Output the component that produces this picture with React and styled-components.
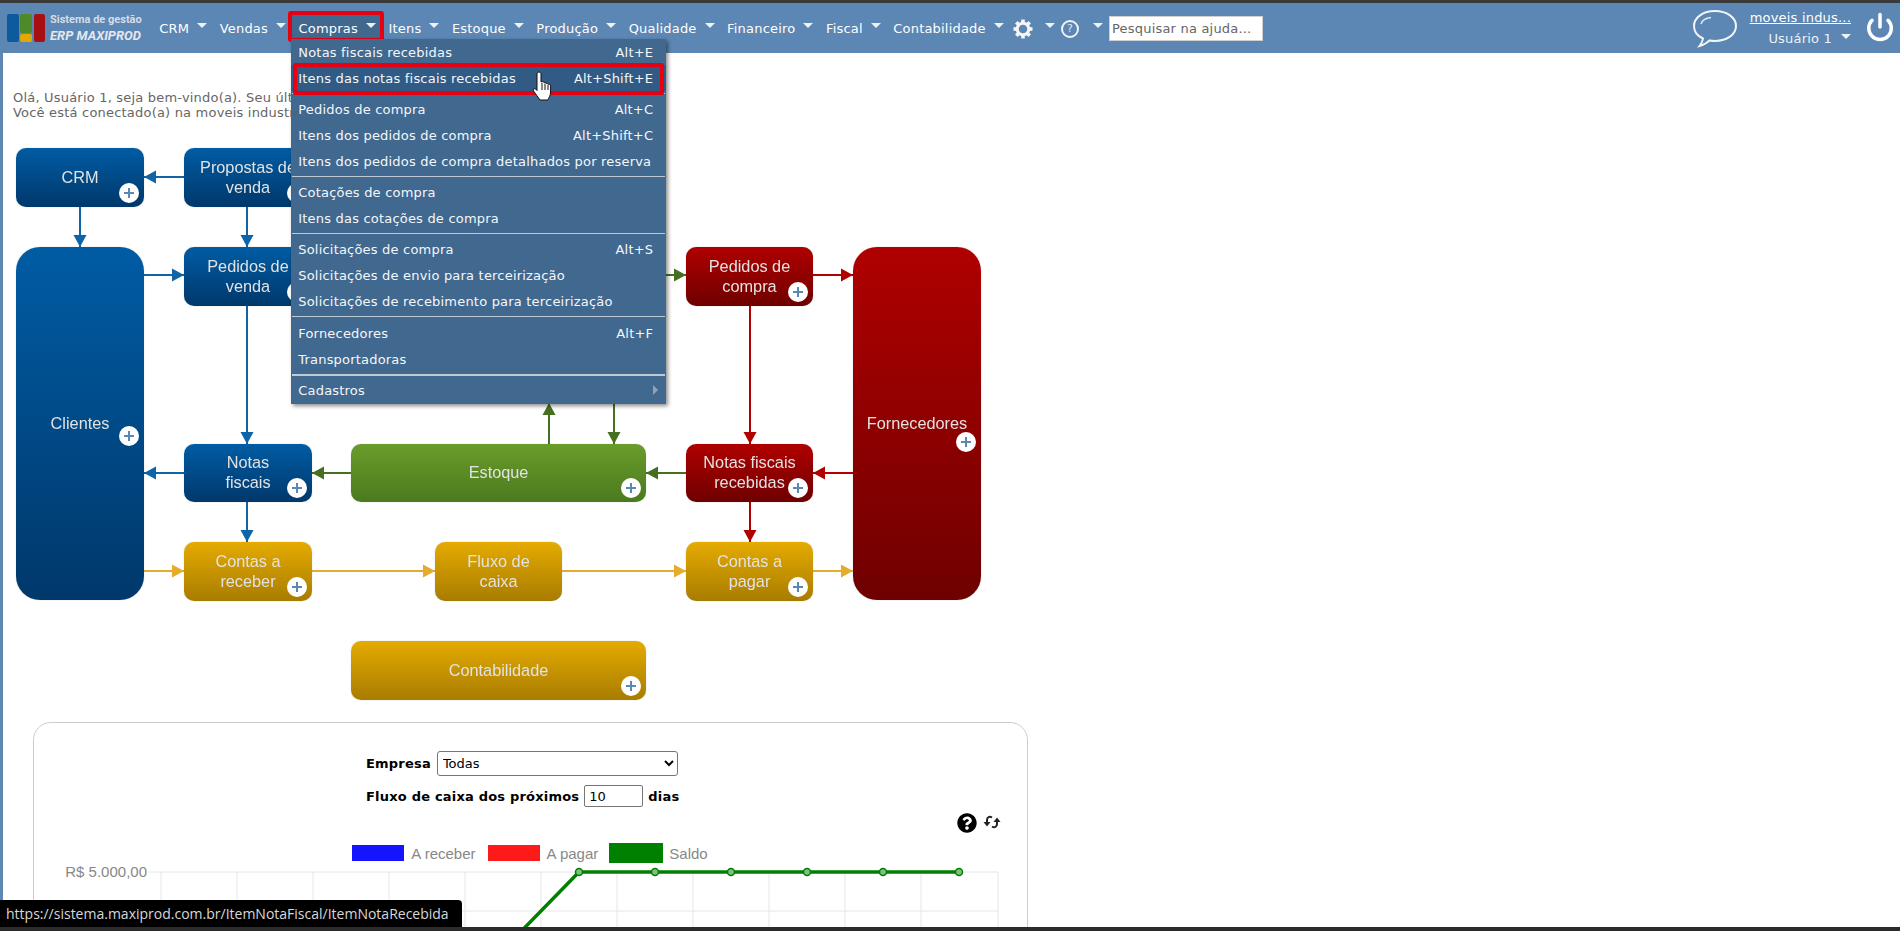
import styled, { createGlobalStyle } from "styled-components";
import { FaQuestionCircle } from "react-icons/fa";
import { Power } from "lucide-react";

const GlobalStyle = createGlobalStyle`
  html, body {
    margin: 0;
    padding: 0;
    height: 931px;
    overflow: hidden;
    background: #fff;
    font-family: "DejaVu Sans", Verdana, sans-serif;
    font-size: 13px;
    letter-spacing: 0.2px;
  }
`;

const Frame = styled.div`
  position: relative;
  display: flex;
  flex-direction: column;
  height: 931px;
  overflow: hidden;
`;

const TopEdge = styled.div`
  height: 3px;
  background: #3a3a3a;
`;

const BottomEdge = styled.div`
  height: 4px;
  background: #2b2b2b;
  position: relative;
  z-index: 6;
`;

const Nav = styled.nav`
  display: flex;
  align-items: center;
  height: 50px;
  background: #5c86b3;
  color: #fff;
  padding: 0 5px 0 7px;
  position: relative;
  z-index: 5;
`;

const Logo = styled.div`
  display: flex;
  gap: 5px;
  width: 137px;
  margin-right: 9px;
  align-items: center;
  letter-spacing: 0;
`;

const LogoMark = styled.svg`
  width: 38px;
  height: 28px;
  flex: none;
`;

const LogoText = styled.div`
  font-family: Roboto, sans-serif;
  display: flex;
  flex-direction: column;
  gap: 1px;
  white-space: nowrap;
`;

const LogoTop = styled.span`
  font-size: 11px;
  font-weight: 700;
  line-height: 14px;
  color: #d5dce5;
`;

const LogoBottom = styled.span`
  font-size: 13px;
  font-weight: 700;
  font-style: italic;
  line-height: 15px;
  color: #e4e8ee;
`;

const NavItem = styled.div`
  position: relative;
  display: flex;
  align-items: center;
  gap: ${(p) => (p.$icon ? "12px" : "8px")};
  padding: 0 ${(p) => (p.$icon ? "3px" : "6.25px")};
  height: 28px;
  white-space: nowrap;

  ${(p) =>
    p.$active &&
    `
    &::after {
      content: "";
      position: absolute;
      top: -3px;
      bottom: 0;
      left: -4px;
      right: -2px;
      background: #41688f;
      border: 4px solid #e60012;
      border-radius: 3px;
    }
    & > * {
      position: relative;
      z-index: 1;
    }
  `}
`;

const Caret = styled.i`
  display: block;
  width: 0;
  height: 0;
  border-left: 5px solid transparent;
  border-right: 5px solid transparent;
  border-top: 5px solid #eef2f6;
  margin-bottom: 5px;
`;

const Gear = styled.svg`
  display: block;
  width: 20px;
  height: 20px;
  margin-top: 2px;
`;

const HelpRing = styled.span`
  display: flex;
  align-items: center;
  justify-content: center;
  box-sizing: border-box;
  width: 18px;
  height: 18px;
  margin-top: 1px;
  margin-right: 2px;
  border: 2px solid #f2f2f2;
  border-radius: 50%;
  font-size: 11px;
  color: #dfe6ee;
`;

const Search = styled.input`
  box-sizing: border-box;
  width: 154px;
  height: 25px;
  margin-left: 3px;
  padding: 0 2px;
  border: 1px solid #d0d0d0;
  background: #fff;
  font: 13px "DejaVu Sans", sans-serif;
  letter-spacing: 0.2px;

  &::placeholder {
    color: #666;
    opacity: 1;
  }
`;

const RightBox = styled.div`
  margin-left: auto;
  display: flex;
  align-items: center;
`;

const Bubble = styled.svg`
  width: 46px;
  height: 40px;
  margin-right: 12px;
  margin-top: 2px;
`;

const UserBox = styled.div`
  display: flex;
  flex-direction: column;
  align-items: flex-end;
  gap: 5px;
  margin-right: 14px;
  line-height: 16px;
`;

const OrgLink = styled.a`
  color: #fff;
  text-decoration: underline;
`;

const UserName = styled.div`
  display: flex;
  align-items: center;
  gap: 9px;
  color: #eef2f6;
`;

const PowerIcon = styled(Power)`
  display: block;
  margin-top: -2px;
`;

const Main = styled.main`
  flex: 1;
  min-height: 0;
  overflow: hidden;
  border-left: 3px solid #5f87b3;
  background: #fff;
`;

const Welcome = styled.div`
  padding: 37px 0 0 10px;
  height: 30px;
  line-height: 15px;
  color: #666;
  white-space: nowrap;
`;

const Canvas = styled.div`
  position: relative;
  width: 1000px;
  height: 590px;
  margin-top: 10px;
`;

const Wires = styled.svg`
  position: absolute;
  inset: 0;
`;

const gradients = {
  blue: "linear-gradient(#005ca4, #00386b)",
  red: "linear-gradient(#b00000, #6f0000)",
  green: "linear-gradient(#699c2a, #4b7a1f)",
  yellow: "linear-gradient(#e5ab00, #a87c00)",
};

const Node = styled.div`
  position: absolute;
  left: ${(p) => p.$x - 3}px;
  top: ${(p) => p.$y - 130}px;
  width: ${(p) => p.$w}px;
  height: ${(p) => p.$h}px;
  display: flex;
  align-items: center;
  justify-content: center;
  text-align: center;
  box-sizing: border-box;
  border-radius: ${(p) => (p.$h > 100 ? "24px" : "10px")};
  background: ${(p) => gradients[p.$color]};
  box-shadow: 0 0 1px rgba(0, 0, 0, 0.35);
  font: 16.3px/20px "Liberation Sans", Arial, sans-serif;
  letter-spacing: 0;
  color: #e2e2e2;
`;

const NodeLabel = styled.div`
  margin-top: -2px;
  filter: blur(0.35px);
`;

const Plus = styled.span`
  position: absolute;
  right: 5px;
  ${(p) => (p.$top ? `top: ${p.$top}px;` : "bottom: 4px;")}
  width: 20px;
  height: 20px;
  border-radius: 50%;
  background: #fff;

  &::before,
  &::after {
    content: "";
    position: absolute;
    background: #5a88b5;
  }
  &::before {
    left: 5px;
    right: 5px;
    top: 9px;
    height: 2px;
  }
  &::after {
    top: 5px;
    bottom: 5px;
    left: 9px;
    width: 2px;
  }
`;

const Menu = styled.div`
  position: absolute;
  left: -1px;
  top: 25px;
  z-index: 2;
  width: 375px;
  padding-bottom: 1px;
  background: #41688f;
  box-shadow: 2px 2px 4px rgba(0, 0, 0, 0.45);
`;

const MenuRow = styled.div`
  position: relative;
  display: flex;
  justify-content: space-between;
  align-items: center;
  height: 26px;
  padding: 0 13px 0 7px;
  color: #f4f7fa;

  ${(p) =>
    p.$active &&
    `
    background: #315b84;
    &::after {
      content: "";
      position: absolute;
      left: 2px;
      right: 2px;
      top: -2px;
      bottom: -4px;
      border: 4px solid #e60012;
      border-radius: 2px;
    }
  `}
`;

const MenuLine = styled.div`
  height: ${(p) => (p.$thick ? "2px" : "1px")};
  margin: 2px 1px ${(p) => (p.$thick ? "1px" : p.$extra ? "3px" : "2px")};
  background: #bfc9d4;
`;

const SubArrow = styled.i`
  width: 0;
  height: 0;
  border-top: 5px solid transparent;
  border-bottom: 5px solid transparent;
  border-left: 5px solid #93a3b4;
  margin-right: -5px;
`;

const Cursor = styled.svg`
  position: absolute;
  left: 241px;
  top: 32px;
  z-index: 3;
  width: 22px;
  height: 30px;
`;

const Panel = styled.section`
  box-sizing: border-box;
  width: 995px;
  height: 300px;
  margin: 2px 0 0 30px;
  border: 1px solid #ccc;
  border-radius: 18px;
  padding-top: 28px;
`;

const FormRow = styled.div`
  display: flex;
  align-items: center;
  gap: ${(p) => p.$gap}px;
  margin: ${(p) => p.$top}px 0 0 332px;
  height: ${(p) => p.$h}px;
  color: #000;
  font-weight: 700;
`;

const Select = styled.select`
  box-sizing: border-box;
  width: 241px;
  height: 25px;
  padding-left: 1px;
  background: #fff;
  border: 1px solid #767676;
  border-radius: 3px;
  font: 13px "DejaVu Sans", sans-serif;
`;

const NumberInput = styled.input`
  box-sizing: border-box;
  width: 59px;
  height: 22px;
  padding: 0 4px;
  border: 1px solid #767676;
  border-radius: 2px;
  font: 13px "DejaVu Sans", sans-serif;
`;

const Tools = styled.div`
  display: flex;
  justify-content: flex-end;
  align-items: center;
  gap: 6px;
  height: 20px;
  margin-top: 6px;
  padding-right: 26px;
  color: #000;
`;

const RefreshIcon = styled.svg`
  display: block;
  width: 18px;
  height: 14px;
  margin-top: -2px;
`;

const Legend = styled.div`
  display: flex;
  justify-content: center;
  align-items: center;
  height: 20px;
  margin: 10px 1px 0 0;
  font: 15px "Liberation Sans", Arial, sans-serif;
  letter-spacing: 0;
  color: #888;
`;

const LegendItem = styled.div`
  display: flex;
  align-items: center;
  gap: 7px;
  margin-right: 12px;
  &:last-child {
    margin: 0 0 0 -1px;
    gap: 6px;
  }
`;

const Swatch = styled.span`
  display: block;
  width: ${(p) => p.$w}px;
  height: ${(p) => p.$h}px;
  background: ${(p) => p.$color};
`;

const Chart = styled.svg`
  display: block;
  width: 993px;
  height: 120px;
  margin-top: 1px;
`;

const StatusTip = styled.div`
  position: absolute;
  left: 0;
  bottom: 4px;
  z-index: 4;
  height: 27px;
  width: 462px;
  box-sizing: border-box;
  padding-left: 6px;
  display: flex;
  align-items: center;
  background: #000;
  border-top-right-radius: 4px;
  color: #d8d8d8;
  font: 14px "Open Sans", sans-serif;
  letter-spacing: 0;
  white-space: nowrap;
`;

const navLabels = [
  "CRM",
  "Vendas",
  "Compras",
  "Itens",
  "Estoque",
  "Produção",
  "Qualidade",
  "Financeiro",
  "Fiscal",
  "Contabilidade",
];

const menuGroups = [
  [
    ["Notas fiscais recebidas", "Alt+E"],
    ["Itens das notas fiscais recebidas", "Alt+Shift+E", true],
  ],
  [
    ["Pedidos de compra", "Alt+C"],
    ["Itens dos pedidos de compra", "Alt+Shift+C"],
    ["Itens dos pedidos de compra detalhados por reserva"],
  ],
  [["Cotações de compra"], ["Itens das cotações de compra"]],
  [
    ["Solicitações de compra", "Alt+S"],
    ["Solicitações de envio para terceirização"],
    ["Solicitações de recebimento para terceirização"],
  ],
  [["Fornecedores", "Alt+F"], ["Transportadoras"]],
];

const nodes = [
  { label: ["CRM"], x: 16, y: 148, w: 128, h: 59, color: "blue" },
  { label: ["Propostas de", "venda"], x: 184, y: 148, w: 128, h: 59, color: "blue" },
  { label: ["Clientes"], x: 16, y: 247, w: 128, h: 353, color: "blue", plusTop: 179 },
  { label: ["Pedidos de", "venda"], x: 184, y: 247, w: 128, h: 59, color: "blue" },
  { label: ["Notas", "fiscais"], x: 184, y: 444, w: 128, h: 58, color: "blue" },
  { label: ["Estoque"], x: 351, y: 444, w: 295, h: 58, color: "green" },
  { label: ["Contas a", "receber"], x: 184, y: 542, w: 128, h: 59, color: "yellow" },
  { label: ["Fluxo de", "caixa"], x: 435, y: 542, w: 127, h: 59, color: "yellow", noPlus: true },
  { label: ["Contabilidade"], x: 351, y: 641, w: 295, h: 59, color: "yellow" },
  { label: ["Pedidos de", "compra"], x: 686, y: 247, w: 127, h: 59, color: "red" },
  { label: ["Notas fiscais", "recebidas"], x: 686, y: 444, w: 127, h: 58, color: "red" },
  { label: ["Contas a", "pagar"], x: 686, y: 542, w: 127, h: 59, color: "yellow" },
  { label: ["Fornecedores"], x: 853, y: 247, w: 128, h: 353, color: "red", plusTop: 185 },
];

const BLUE = "#0f64a8";
const GREEN = "#45701f";
const RED = "#b00000";
const YELLOW = "#e5ab2b";

const arrows = [
  [184, 177, 144, 177, BLUE],
  [80, 207, 80, 247, BLUE],
  [247, 207, 247, 247, BLUE],
  [144, 275, 184, 275, BLUE],
  [247, 306, 247, 444, BLUE],
  [184, 473, 144, 473, BLUE],
  [247, 502, 247, 542, BLUE],
  [351, 473, 312, 473, GREEN],
  [686, 473, 646, 473, GREEN],
  [549, 444, 549, 403, GREEN],
  [614, 403, 614, 444, GREEN],
  [660, 275, 686, 275, GREEN],
  [144, 571, 184, 571, YELLOW],
  [312, 571, 435, 571, YELLOW],
  [562, 571, 686, 571, YELLOW],
  [813, 571, 853, 571, YELLOW],
  [813, 275, 853, 275, RED],
  [750, 306, 750, 444, RED],
  [853, 473, 813, 473, RED],
  [750, 502, 750, 542, RED],
];

function arrowHead(x1, y1, x2, y2) {
  const dx = Math.sign(x2 - x1);
  const dy = Math.sign(y2 - y1);
  const bx = x2 - dx * 12;
  const by = y2 - dy * 12;
  return `${x2},${y2} ${bx + dy * 6.5},${by + dx * 6.5} ${bx - dy * 6.5},${by - dx * 6.5}`;
}

const gridX = [160, 236, 312, 388, 464, 540, 616, 692, 768, 844, 920, 997];
const gridY = [873, 912, 952];
const dots = [578, 654, 730, 806, 882, 958];
const gearTeeth = [0, 45, 90, 135, 180, 225, 270, 315];

const App = () => {
  return (
    <Frame>
      <GlobalStyle />
      <TopEdge />
      <Nav>
        <Logo>
          <LogoMark viewBox="0 0 38 28">
            <rect x="0" y="0" width="12" height="28" rx="2" fill="#0d5a9e" />
            <rect x="13" y="0" width="12" height="19" rx="2" fill="#4f8a2a" />
            <rect x="13" y="20" width="12" height="8" rx="2" fill="#e0a800" />
            <rect x="27" y="0" width="11" height="28" rx="2" fill="#a80f12" />
          </LogoMark>
          <LogoText>
            <LogoTop>Sistema de gestão</LogoTop>
            <LogoBottom>ERP MAXIPROD</LogoBottom>
          </LogoText>
        </Logo>

        {navLabels.map((label) => (
          <NavItem key={label} $active={label === "Compras"}>
            <span>{label}</span>
            <Caret />
            {label === "Compras" && (
              <Menu>
                <Cursor viewBox="0 0 22 30">
                  <path
                    d="M7 1c1.2 0 2 1 2 2v8l1-.3c1-.2 1.8.2 2 .9.9-.4 1.9-.1 2.2.8 1-.4 2-.1 2.4.9.8-.3 2 .2 2 1.5V21c0 3-1.5 6-3 8H8C6.5 27 3.5 22.5 1.5 20c-1-1.5.5-3 2-2L5 19.5V3c0-1 1-2 2-2Z"
                    fill="#fff"
                    stroke="#111"
                    strokeWidth="1"
                  />
                  <path d="M10 12v7M13 12.500v6.500M16 13.500v5.500" stroke="#111" strokeWidth="1" />
                </Cursor>
                {menuGroups.map((group, i) => (
                  <div key={i}>
                    {group.map(([text, shortcut, active]) => (
                      <MenuRow key={text} $active={active}>
                        <span>{text}</span>
                        {shortcut && <span>{shortcut}</span>}
                      </MenuRow>
                    ))}
                    <MenuLine $thick={i === menuGroups.length - 1} $extra={i === 3} />
                  </div>
                ))}
                <MenuRow>
                  <span>Cadastros</span>
                  <SubArrow />
                </MenuRow>
              </Menu>
            )}
          </NavItem>
        ))}

        <NavItem $icon>
          <Gear viewBox="0 0 20 20">
            <circle cx="10" cy="10" r="5.800" fill="none" stroke="#f6f6f6" strokeWidth="3" />
            {gearTeeth.map((angle) => (
              <rect
                key={angle}
                x="8.200"
                y="0.500"
                width="3.600"
                height="4"
                fill="#f6f6f6"
                transform={`rotate(${angle} 10 10)`}
              />
            ))}
          </Gear>
          <Caret />
        </NavItem>
        <NavItem $icon>
          <HelpRing>?</HelpRing>
          <Caret />
        </NavItem>
        <Search placeholder="Pesquisar na ajuda..." />

        <RightBox>
          <Bubble viewBox="0 0 46 40">
            <path
              d="M23 2C11 2 2 8.500 2 17c0 5.500 3.500 10 9 12.500-.3 2.500-1.500 5-3.500 7.500 4-1 7.500-3 10-5.600 1.800.3 3.600.5 5.500.5 12 0 21-6.500 21-14.900S35 2 23 2Z"
              fill="none"
              stroke="#f2f5f8"
              strokeWidth="2"
            />
            <path d="M9 15c1-3.500 5-6 10-6.500" fill="none" stroke="#dfe7ef" strokeWidth="1.500" />
          </Bubble>
          <UserBox>
            <OrgLink>moveis indus...</OrgLink>
            <UserName>
              <span>Usuário 1</span>
              <Caret />
            </UserName>
          </UserBox>
          <PowerIcon size={30} color="#fff" strokeWidth={2.8} />
        </RightBox>
      </Nav>

      <Main>
        <Welcome>
          Olá, Usuário 1, seja bem-vindo(a). Seu último acesso
          <br />
          Você está conectado(a) na moveis industriais
        </Welcome>

        <Canvas>
          <Wires width="1000" height="590" viewBox="3 130 1000 590">
            {arrows.map(([x1, y1, x2, y2, color], i) => (
              <g key={i}>
                <line x1={x1} y1={y1} x2={x2} y2={y2} stroke={color} strokeWidth="2" />
                <polygon points={arrowHead(x1, y1, x2, y2)} fill={color} />
              </g>
            ))}
          </Wires>
          {nodes.map((node) => (
            <Node
              key={node.label.join(" ")}
              $x={node.x}
              $y={node.y}
              $w={node.w}
              $h={node.h}
              $color={node.color}
            >
              <NodeLabel>
                {node.label.map((line) => (
                  <div key={line}>{line}</div>
                ))}
              </NodeLabel>
              {!node.noPlus && <Plus $top={node.plusTop} />}
            </Node>
          ))}
        </Canvas>

        <Panel>
          <FormRow $gap={6} $top={0} $h={25}>
            <span>Empresa</span>
            <Select defaultValue="Todas">
              <option>Todas</option>
            </Select>
          </FormRow>
          <FormRow $gap={5} $top={9} $h={22}>
            <span>Fluxo de caixa dos próximos</span>
            <NumberInput defaultValue="10" />
            <span>dias</span>
          </FormRow>
          <Tools>
            <FaQuestionCircle size={20} />
            <RefreshIcon viewBox="0 0 18 14">
              <path d="M9 2.500C6.500 1 4 2 4 5v3" fill="none" stroke="#222" strokeWidth="2" />
              <polygon points="0.500,7 7.500,7 4,11.500" fill="#222" />
              <path d="M9 11.500c2.500 1.500 5 .5 5-2.500V6" fill="none" stroke="#222" strokeWidth="2" />
              <polygon points="10.500,7 17.500,7 14,2.500" fill="#222" />
            </RefreshIcon>
          </Tools>
          <Legend>
            <LegendItem>
              <Swatch $w={52} $h={16} $color="#1414ff" />
              A receber
            </LegendItem>
            <LegendItem>
              <Swatch $w={52} $h={16} $color="#ff1a1a" />
              A pagar
            </LegendItem>
            <LegendItem>
              <Swatch $w={54} $h={20} $color="#008000" />
              Saldo
            </LegendItem>
          </Legend>
          <Chart viewBox="33 865 993 120">
            {gridX.map((x) => (
              <line key={x} x1={x} y1={873} x2={x} y2={985} stroke="#e6e6e6" />
            ))}
            {gridY.map((y) => (
              <line key={y} x1={147} y1={y} x2={997} y2={y} stroke="#e6e6e6" />
            ))}
            <text
              x={146}
              y={878}
              textAnchor="end"
              fontFamily="Liberation Sans, Arial, sans-serif"
              fontSize="15"
              letterSpacing="0"
              fill="#888"
            >
              R$ 5.000,00
            </text>
            <polyline
              points="500,953 578,873 958,873"
              fill="none"
              stroke="#008000"
              strokeWidth="3.500"
            />
            {dots.map((x) => (
              <circle key={x} cx={x} cy={873} r="3.500" fill="#7fbf7f" stroke="#008000" strokeWidth="1.500" />
            ))}
          </Chart>
        </Panel>
      </Main>

      <StatusTip>https://sistema.maxiprod.com.br/ItemNotaFiscal/ItemNotaRecebida</StatusTip>
      <BottomEdge />
    </Frame>
  );
};

export default App;
